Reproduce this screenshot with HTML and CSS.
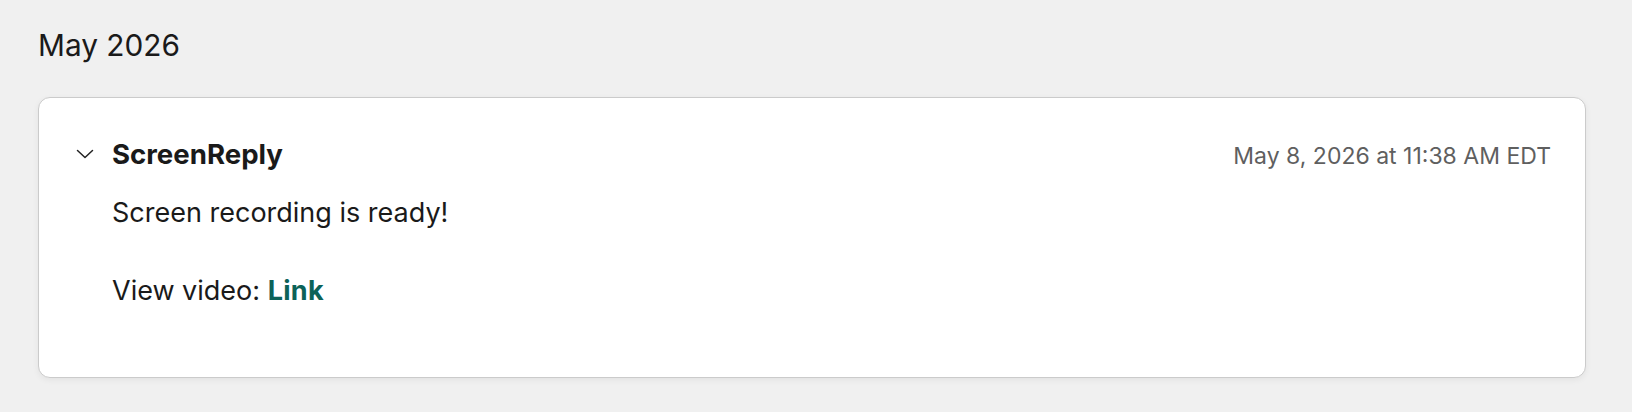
FILE: index.html
```html
<!DOCTYPE html>
<html lang="en">
<head>
<meta charset="utf-8">
<title>Messages</title>
<link rel="stylesheet" href="styles.css">
</head>
<body>
<main class="page">
  <h2 class="month">May 2026</h2>
  <article class="card">
    <header class="card-head">
      <button class="toggle" aria-label="Collapse">
        <svg width="18" height="10" viewBox="0 0 18 10" fill="none" stroke="#222" stroke-width="1.5" stroke-linecap="round" stroke-linejoin="round"><path d="M1.5 1.5 L9 8.5 L16.5 1.5"/></svg>
      </button>
      <span class="sender">ScreenReply</span>
      <time class="stamp">May 8, 2026 at 11:38 AM EDT</time>
    </header>
    <div class="card-body">
      <p class="line">Screen recording is ready!</p>
      <p class="line">View video: <a class="link" href="#">Link</a></p>
    </div>
  </article>
</main>
</body>
</html>
```
FILE: styles.css
```css
* { box-sizing: border-box; }
html, body { margin: 0; padding: 0; }
body {
  background: #f0f0f0;
  font-family: "Inter", "Noto Sans", sans-serif;
  color: #1a1a1a;
  width: 1632px;
  height: 412px;
  overflow: hidden;
}
.page {
  padding: 25px 46px 0 38px;
}
.month {
  margin: 0;
  font-size: 29.8px;
  font-weight: 400;
  line-height: 40px;
  color: #1a1a1a;
}
.card {
  margin-top: 32px;
  background: #fff;
  border: 1px solid #cbcbcb;
  border-radius: 12px;
  box-shadow: 0 2px 6px rgba(0,0,0,0.06);
  padding: 36px 34px 68px 38px;
}
.card-head {
  display: flex;
  align-items: baseline;
  height: 40px;
  line-height: 40px;
}
.toggle {
  align-self: center;
  background: none;
  border: 0;
  padding: 0;
  width: 35px;
  height: 40px;
  display: flex;
  align-items: center;
  justify-content: flex-start;
  cursor: pointer;
}
.toggle svg { display: block; margin-left: -1px; }
.sender {
  font-size: 27.6px;
  font-weight: 700;
}
.stamp {
  margin-left: auto;
  font-size: 23px;
  color: #5f5f5f;
}
.card-body {
  padding-left: 35px;
  padding-top: 21px;
}
.line {
  margin: 0;
  font-size: 27px;
  line-height: 36px;
}
.line + .line { margin-top: 42px; }
.link {
  color: #0c6258;
  font-weight: 700;
  text-decoration: none;
  letter-spacing: 0.3px;
}
```
